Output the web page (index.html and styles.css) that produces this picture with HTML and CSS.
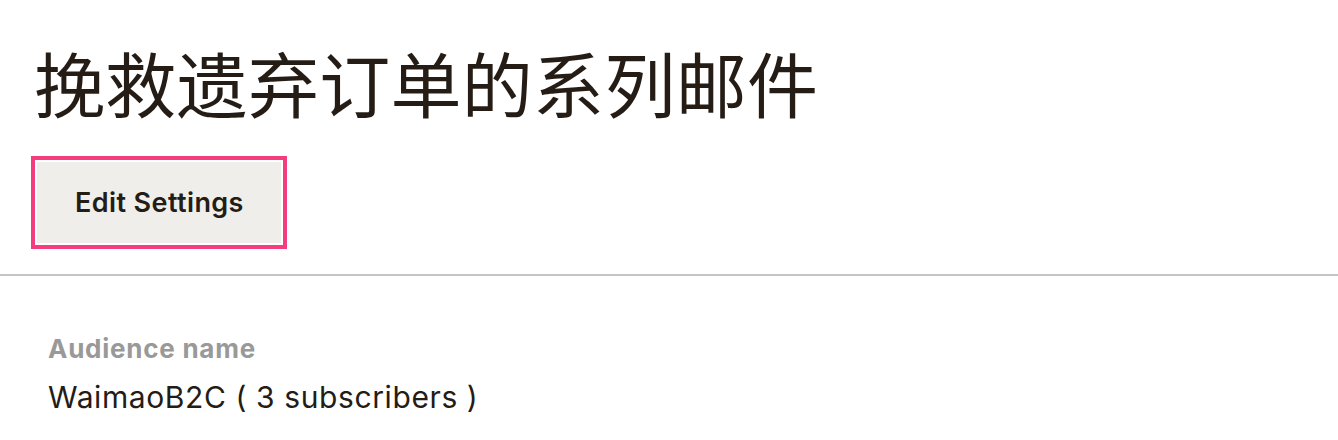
FILE: index.html
```html
<!DOCTYPE html>
<html lang="zh">
<head>
<meta charset="utf-8">
<title>挽救遗弃订单的系列邮件</title>
<link rel="stylesheet" href="styles.css">
</head>
<body>
<header class="page-header">
  <h1 class="title">挽救遗弃订单的系列邮件</h1>
  <button class="btn" type="button">Edit Settings</button>
</header>
<section class="details">
  <dl class="field">
    <dt class="field-label">Audience name</dt>
    <dd class="field-value">WaimaoB2C ( 3 subscribers )</dd>
  </dl>
</section>
</body>
</html>
```

FILE: styles.css
```css
html, body {
  margin: 0;
  padding: 0;
  background: #ffffff;
}

body {
  font-family: Inter, "Noto Sans", "Noto Sans CJK SC", sans-serif;
  color: #241c15;
}

.page-header {
  display: flex;
  flex-direction: column;
  align-items: flex-start;
  padding: 39px 37px 31px 37px;
  border-bottom: 2px solid #c4c4c4;
}

.title {
  margin: 0 0 38px -3px;
  font-family: "Noto Sans CJK SC", sans-serif;
  font-weight: 400;
  font-size: 71px;
  letter-spacing: 0.3px;
  line-height: 85px;
  color: #241c15;
}

.btn {
  display: inline-flex;
  align-items: center;
  height: 81px;
  padding: 0 37px 0 38px;
  margin: 0;
  border: none;
  background: #efeeea;
  color: #241c15;
  font-family: Inter, sans-serif;
  font-size: 27px;
  font-weight: 600;
  letter-spacing: 0.4px;
  line-height: 1;
  outline: 4px solid #f33d7c;
  outline-offset: 2px;
}

.details {
  padding: 56px 48px 0 48px;
}

.field {
  margin: 0;
}

.field-label {
  margin: 0;
  font-size: 26px;
  font-weight: 700;
  letter-spacing: 0.75px;
  line-height: 34px;
  color: #999999;
}

.field-value {
  margin: 13px 0 0 0;
  font-size: 30px;
  font-weight: 400;
  letter-spacing: 0.6px;
  line-height: 36px;
  color: #241c15;
}
```
